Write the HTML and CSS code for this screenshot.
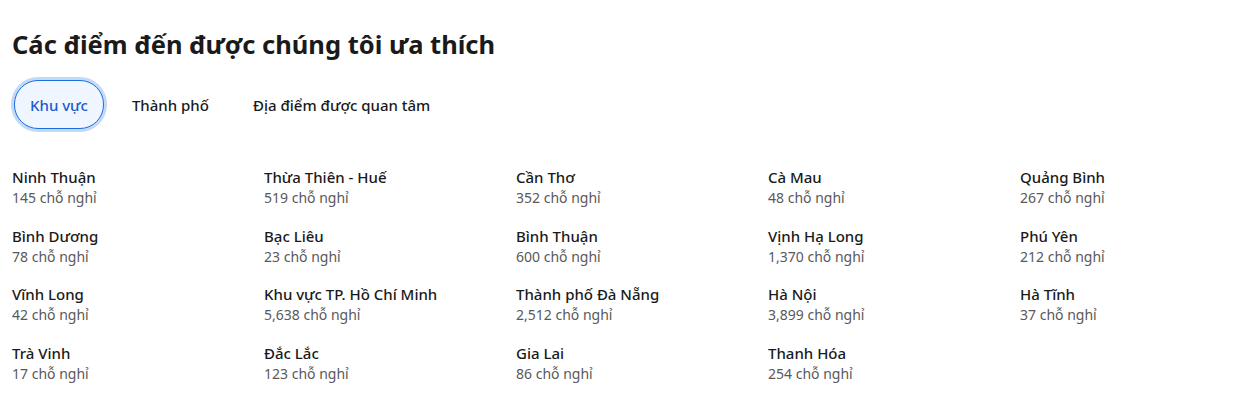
FILE: index.html
```html
<!DOCTYPE html>
<html lang="vi">
<head>
<meta charset="utf-8">
<link rel="stylesheet" href="styles.css">
</head>
<body>
<section class="dest">
  <h2 class="dest-title">Các điểm đến được chúng tôi ưa thích</h2>
  <div class="tabs">
    <button class="tab tab-active">Khu vực</button>
    <button class="tab">Thành phố</button>
    <button class="tab">Địa điểm được quan tâm</button>
  </div>
  <ul class="grid">
    <li class="item"><span class="name">Ninh Thuận</span><span class="count">145 chỗ nghỉ</span></li>
    <li class="item"><span class="name">Thừa Thiên - Huế</span><span class="count">519 chỗ nghỉ</span></li>
    <li class="item"><span class="name">Cần Thơ</span><span class="count">352 chỗ nghỉ</span></li>
    <li class="item"><span class="name">Cà Mau</span><span class="count">48 chỗ nghỉ</span></li>
    <li class="item"><span class="name">Quảng Bình</span><span class="count">267 chỗ nghỉ</span></li>
    <li class="item"><span class="name">Bình Dương</span><span class="count">78 chỗ nghỉ</span></li>
    <li class="item"><span class="name">Bạc Liêu</span><span class="count">23 chỗ nghỉ</span></li>
    <li class="item"><span class="name">Bình Thuận</span><span class="count">600 chỗ nghỉ</span></li>
    <li class="item"><span class="name">Vịnh Hạ Long</span><span class="count">1,370 chỗ nghỉ</span></li>
    <li class="item"><span class="name">Phú Yên</span><span class="count">212 chỗ nghỉ</span></li>
    <li class="item"><span class="name">Vĩnh Long</span><span class="count">42 chỗ nghỉ</span></li>
    <li class="item"><span class="name">Khu vực TP. Hồ Chí Minh</span><span class="count">5,638 chỗ nghỉ</span></li>
    <li class="item"><span class="name">Thành phố Đà Nẵng</span><span class="count">2,512 chỗ nghỉ</span></li>
    <li class="item"><span class="name">Hà Nội</span><span class="count">3,899 chỗ nghỉ</span></li>
    <li class="item"><span class="name">Hà Tĩnh</span><span class="count">37 chỗ nghỉ</span></li>
    <li class="item"><span class="name">Trà Vinh</span><span class="count">17 chỗ nghỉ</span></li>
    <li class="item"><span class="name">Đắc Lắc</span><span class="count">123 chỗ nghỉ</span></li>
    <li class="item"><span class="name">Gia Lai</span><span class="count">86 chỗ nghỉ</span></li>
    <li class="item"><span class="name">Thanh Hóa</span><span class="count">254 chỗ nghỉ</span></li>
  </ul>
</section>
</body>
</html>
```
FILE: styles.css
```css
* { box-sizing: border-box; }
html, body { margin: 0; padding: 0; background: #fff; }
body {
  font-family: "Noto Sans", "Open Sans", sans-serif;
  color: #1a1a1a;
  overflow: hidden;
}
.dest { padding: 26px 0 0 12px; }
.dest-title {
  margin: 0;
  font-size: 25.5px;
  line-height: 36px;
  font-weight: 700;
  color: #1a1a1a;
}
.tabs {
  display: flex;
  align-items: center;
  gap: 12px;
  margin-top: 18px;
  margin-left: 2px;
}
.tab {
  font-family: inherit;
  font-size: 15px;
  font-weight: 500;
  line-height: 20px;
  color: #1a1a1a;
  background: transparent;
  border: 1px solid transparent;
  border-radius: 24px;
  height: 49px;
  padding: 0 15px;
  cursor: pointer;
}
.tab-active {
  color: #1a5ccf;
  background: #f0f6ff;
  border-color: #1a6fe0;
  box-shadow: 0 0 0 3px #c3d9f8;
}
.grid {
  list-style: none;
  margin: 37px 0 0 0;
  padding: 0;
  display: grid;
  grid-template-columns: repeat(5, 252px);
  row-gap: 16.67px;
}
.item { display: flex; flex-direction: column; }
.name {
  font-size: 15px;
  line-height: 22px;
  font-weight: 500;
  color: #1a1a1a;
}
.count {
  font-size: 14px;
  line-height: 20px;
  color: #595959;
}
```
